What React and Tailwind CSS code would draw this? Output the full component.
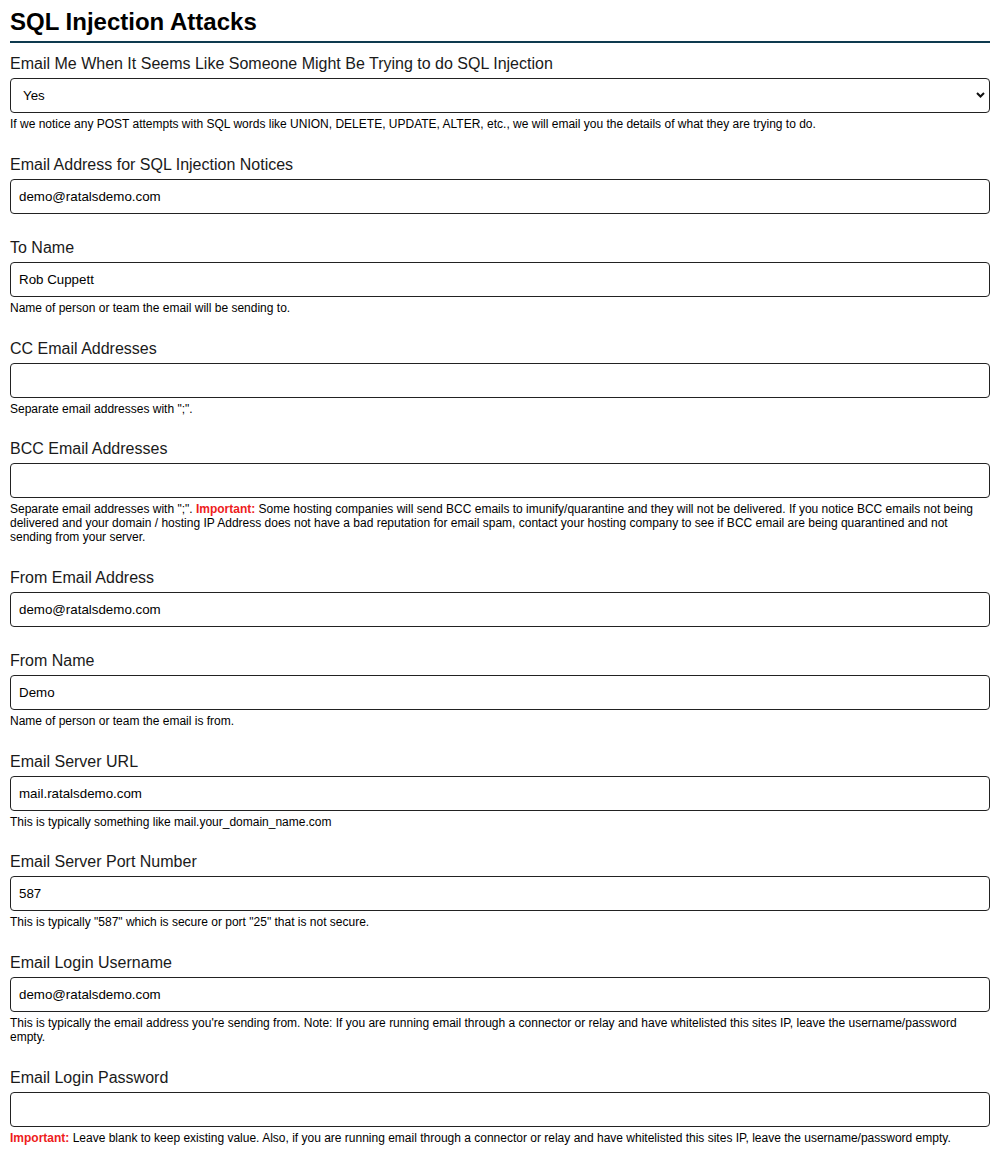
import { useState } from 'react';

const FONT = { fontFamily: '"Liberation Sans", Arial, Helvetica, sans-serif' };

const Important = () => <strong className="font-bold text-[#ee1c1c]">Important:</strong>;

const fields = [
  {
    name: 'notify_email',
    label: 'Email Address for SQL Injection Notices',
    value: 'demo@ratalsdemo.com',
  },
  {
    name: 'to_name',
    label: 'To Name',
    value: 'Rob Cuppett',
    help: 'Name of person or team the email will be sending to.',
  },
  {
    name: 'cc',
    label: 'CC Email Addresses',
    value: '',
    help: 'Separate email addresses with ";".',
  },
  {
    name: 'bcc',
    label: 'BCC Email Addresses',
    value: '',
    help: (
      <>
        Separate email addresses with &quot;;&quot;. <Important /> Some hosting companies will send BCC emails to
        imunify/quarantine and they will not be delivered. If you notice BCC emails not being delivered and your
        domain / hosting IP Address does not have a bad reputation for email spam, contact your hosting company to see
        if BCC email are being quarantined and not sending from your server.
      </>
    ),
  },
  {
    name: 'from_email',
    label: 'From Email Address',
    value: 'demo@ratalsdemo.com',
  },
  {
    name: 'from_name',
    label: 'From Name',
    value: 'Demo',
    help: 'Name of person or team the email is from.',
  },
  {
    name: 'server_url',
    label: 'Email Server URL',
    value: 'mail.ratalsdemo.com',
    help: 'This is typically something like mail.your_domain_name.com',
  },
  {
    name: 'port',
    label: 'Email Server Port Number',
    value: '587',
    help: 'This is typically "587" which is secure or port "25" that is not secure.',
  },
  {
    name: 'username',
    label: 'Email Login Username',
    value: 'demo@ratalsdemo.com',
    help: "This is typically the email address you're sending from. Note: If you are running email through a connector or relay and have whitelisted this sites IP, leave the username/password empty.",
  },
  {
    name: 'password',
    label: 'Email Login Password',
    value: '',
    type: 'password',
    help: (
      <>
        <Important /> Leave blank to keep existing value. Also, if you are running email through a connector or relay
        and have whitelisted this sites IP, leave the username/password empty.
      </>
    ),
  },
];

const Help = ({ children }) => (
  <p className="mt-[5px] text-[12px] leading-[13.8px] text-black">{children}</p>
);

const Label = ({ htmlFor, children }) => (
  <label htmlFor={htmlFor} className="mb-[5px] block text-[16px] leading-[18px] text-[#1a1a1a]">
    {children}
  </label>
);

const TextField = ({ field }) => {
  const [value, setValue] = useState(field.value);
  return (
    <div className={field.help ? '' : 'pb-[1px]'}>
      <Label htmlFor={field.name}>{field.label}</Label>
      <input
        id={field.name}
        name={field.name}
        type={field.type || 'text'}
        value={value}
        onChange={(e) => setValue(e.target.value)}
        className="block h-[35px] w-full rounded-[4px] border border-[#222] bg-white px-[8px] text-[13.333px] text-black outline-none"
      />
      {field.help && <Help>{field.help}</Help>}
    </div>
  );
};

export default function App() {
  const [notify, setNotify] = useState('Yes');

  return (
    <div className="bg-white px-[10px] pb-[9px]" style={FONT}>
      <h2 className="mt-[8px] border-b-2 border-[#0e3a4f] pb-[6px] text-[24px] font-bold leading-[27px] text-black">
        SQL Injection Attacks
      </h2>

      <div className="mt-[12px] flex flex-col gap-[24px]">
        <div>
          <Label htmlFor="notify">Email Me When It Seems Like Someone Might Be Trying to do SQL Injection</Label>
          <div className="relative">
            <select
              id="notify"
              value={notify}
              onChange={(e) => setNotify(e.target.value)}
              className="block h-[35px] w-full appearance-none rounded-[4px] border border-[#222] bg-white pl-[12px] text-[13.333px] text-black outline-none"
            >
              <option>Yes</option>
              <option>No</option>
            </select>
            <svg
              className="pointer-events-none absolute right-[5px] top-[14px]"
              width="9"
              height="6"
              viewBox="0 0 9 6"
              fill="none"
            >
              <path d="M1 1l3.5 3.5L8 1" stroke="#111" strokeWidth="2" />
            </svg>
          </div>
          <Help>
            If we notice any POST attempts with SQL words like UNION, DELETE, UPDATE, ALTER, etc., we will email you
            the details of what they are trying to do.
          </Help>
        </div>

        {fields.map((f) => (
          <TextField key={f.name} field={f} />
        ))}
      </div>
    </div>
  );
}
